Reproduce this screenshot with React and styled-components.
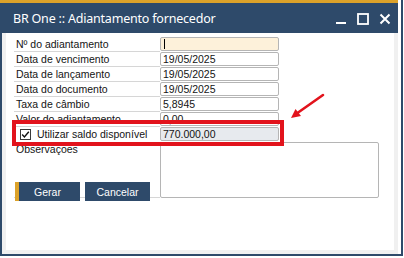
import React from 'react';
import styled, { createGlobalStyle } from 'styled-components';

const Colors = {
  navy: '#2e4a6a',
  gold: '#dca22a',
  frame: '#f0f0f0',
  line: '#d6d6d6',
  inputBorder: '#b5b5b5',
  beige: '#fdf1da',
  readonly: '#e7eaee',
  red: '#e2131c',
  text: '#141414',
};

const GlobalStyle = createGlobalStyle`
  html, body {
    margin: 0;
    padding: 0;
    background: #fff;
  }
  body {
    font-family: "Liberation Sans", Arial, sans-serif;
  }
`;

const Screen = styled.div`
  position: relative;
  width: 404px;
  height: 258px;
  overflow: hidden;
  background: #fff;
`;

const Window = styled.div`
  width: 403px;
  height: 256px;
  box-sizing: border-box;
  border-left: 2px solid ${Colors.navy};
  border-right: 2px solid ${Colors.navy};
  border-bottom: 2px solid ${Colors.navy};
  padding-right: 3px;
  display: flex;
  flex-direction: column;
`;

const TitleBar = styled.header`
  height: 30px;
  border-top: 3px solid ${Colors.gold};
  background: ${Colors.navy};
  display: flex;
  align-items: center;
  justify-content: space-between;
  padding: 0 7px 0 13px;
  margin-left: -2px;
`;

const Title = styled.h1`
  margin: 0;
  color: #fff;
  font-family: "Noto Sans", "Open Sans", sans-serif;
  font-weight: 400;
  font-size: 12.5px;
  letter-spacing: -0.2px;
  padding-top: 1px;
`;

const Controls = styled.div`
  display: flex;
  align-items: center;
  gap: 10px;
  margin-top: 1px;
`;

const Body = styled.section`
  flex: 1;
  border: 4px solid ${Colors.frame};
  border-top: none;
  display: flex;
  flex-direction: column;
  padding: 4px 0 0 8px;
`;

const Form = styled.div`
  display: grid;
  grid-template-columns: 146px auto;
  grid-auto-rows: 15px;
  justify-content: start;
`;

const Label = styled.div`
  box-sizing: border-box;
  height: ${(p) => (p.tall ? '56px' : '15px')};
  border-bottom: 1px solid ${(p) => (p.plain ? 'transparent' : Colors.line)};
  padding-left: ${(p) => (p.check ? '6px' : '2px')};
  font-size: 10.5px;
  line-height: 14px;
  color: ${Colors.text};
  display: flex;
  align-items: ${(p) => (p.tall ? 'flex-start' : 'center')};
  gap: 6px;
  white-space: nowrap;
`;

const Field = styled.div`
  box-sizing: border-box;
  width: 119px;
  height: 14px;
  border: 1px solid ${Colors.inputBorder};
  border-radius: 2px;
  background: ${(p) => p.bg || '#fff'};
  padding-left: 2px;
  font-size: 10.5px;
  line-height: 12px;
  color: ${Colors.text};
  display: flex;
  align-items: center;
`;

const TextArea = styled.div`
  box-sizing: border-box;
  width: 219px;
  height: 56px;
  border: 1px solid ${Colors.inputBorder};
  border-radius: 2px;
  background: #fff;
`;

const Caret = styled.span`
  width: 1px;
  height: 10px;
  margin-left: 1px;
  background: #000;
`;

const CheckBox = styled.span`
  box-sizing: border-box;
  width: 11px;
  height: 11px;
  border: 1px solid #3a3a3a;
  background: #fff;
  display: flex;
  align-items: center;
  justify-content: center;
`;

const Buttons = styled.div`
  display: flex;
  gap: 5px;
  margin: 25px 0 0 1px;
`;

const Button = styled.button`
  box-sizing: border-box;
  width: 65px;
  height: 19px;
  border: none;
  border-left: 4px solid ${(p) => (p.primary ? Colors.gold : Colors.navy)};
  background: ${Colors.navy};
  color: #fff;
  font-family: "Liberation Sans", Arial, sans-serif;
  font-size: 10.5px;
  padding: 0 4px 0 0;
  cursor: pointer;
`;

const Highlight = styled.div`
  position: absolute;
  left: 12px;
  top: 120px;
  width: 272px;
  height: 26px;
  box-sizing: border-box;
  border: 4px solid ${Colors.red};
  pointer-events: none;
`;

const Arrow = styled.svg`
  position: absolute;
  left: 286px;
  top: 90px;
  pointer-events: none;
`;

const rows = [
  { label: 'Nº do adiantamento', value: null, bg: Colors.beige },
  { label: 'Data de vencimento', value: '19/05/2025' },
  { label: 'Data de lançamento', value: '19/05/2025' },
  { label: 'Data do documento', value: '19/05/2025' },
  { label: 'Taxa de câmbio', value: '5,8945' },
  { label: 'Valor do adiantamento', value: '0,00' },
];

const App = () => (
  <>
    <GlobalStyle />
    <Screen>
      <Window>
        <TitleBar>
          <Title>BR One :: Adiantamento fornecedor</Title>
          <Controls>
            <svg width="12" height="12" viewBox="0 0 12 12">
              <rect x="1" y="9" width="10" height="2" fill="#fff" />
            </svg>
            <svg width="12" height="12" viewBox="0 0 12 12">
              <rect x="1" y="1" width="10" height="10" fill="none" stroke="#fff" strokeWidth="1.8" />
            </svg>
            <svg width="12" height="12" viewBox="0 0 12 12">
              <path d="M1.5 1.5 L10.5 10.5 M10.5 1.5 L1.5 10.5" stroke="#fff" strokeWidth="2" />
            </svg>
          </Controls>
        </TitleBar>
        <Body>
          <Form>
            {rows.map((r) => (
              <React.Fragment key={r.label}>
                <Label>{r.label}</Label>
                <Field bg={r.bg}>{r.value ?? <Caret />}</Field>
              </React.Fragment>
            ))}
            <Label check plain>
              <CheckBox>
                <svg width="9" height="9" viewBox="0 0 9 9">
                  <path d="M1.2 4.6 L3.4 6.9 L7.8 1.8" fill="none" stroke="#111" strokeWidth="1.4" />
                </svg>
              </CheckBox>
              Utilizar saldo disponível
            </Label>
            <Field bg={Colors.readonly}>770.000,00</Field>
            <Label tall>Observações</Label>
            <TextArea />
          </Form>
          <Buttons>
            <Button primary>Gerar</Button>
            <Button>Cancelar</Button>
          </Buttons>
        </Body>
      </Window>
      <Highlight />
      <Arrow width="40" height="32" viewBox="0 0 40 32">
        <path d="M37 5 L10 24" stroke={Colors.red} strokeWidth="2.6" strokeLinecap="round" />
        <path d="M5 28 L9.5 19 L15 26 Z" fill={Colors.red} />
      </Arrow>
    </Screen>
  </>
);

export default App;
